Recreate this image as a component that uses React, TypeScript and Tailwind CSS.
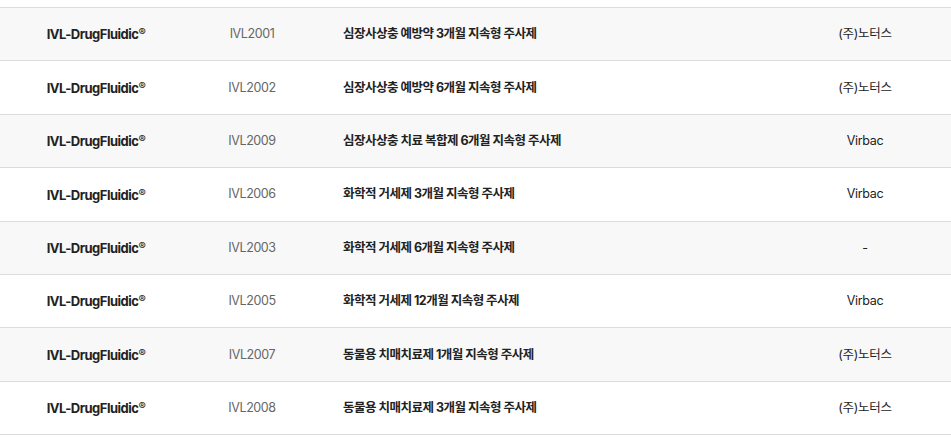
import React from 'react';

interface Product {
  code: string;
  name: string;
  maker: string;
}

const products: Product[] = [
  { code: 'IVL2001', name: '심장사상충 예방약 3개월 지속형 주사제', maker: '(주)노터스' },
  { code: 'IVL2002', name: '심장사상충 예방약 6개월 지속형 주사제', maker: '(주)노터스' },
  { code: 'IVL2009', name: '심장사상충 치료 복합제 6개월 지속형 주사제', maker: 'Virbac' },
  { code: 'IVL2006', name: '화학적 거세제 3개월 지속형 주사제', maker: 'Virbac' },
  { code: 'IVL2003', name: '화학적 거세제 6개월 지속형 주사제', maker: '-' },
  { code: 'IVL2005', name: '화학적 거세제 12개월 지속형 주사제', maker: 'Virbac' },
  { code: 'IVL2007', name: '동물용 치매치료제 1개월 지속형 주사제', maker: '(주)노터스' },
  { code: 'IVL2008', name: '동물용 치매치료제 3개월 지속형 주사제', maker: '(주)노터스' },
];

export default function App() {
  return (
    <div
      className="w-[951px] h-[443px] bg-white pt-[7px] text-[13px] text-[#222]"
      style={{ fontFamily: 'Inter, "Noto Sans CJK KR", sans-serif' }}
    >
      <div className="border-t border-[#dcdcdc]">
        {products.map((p, i) => (
          <div
            key={p.code}
            className={`grid grid-cols-[192px_120px_467px_172px] items-center h-[53.375px] pt-[1px] border-b border-[#dcdcdc] ${
              i % 2 === 0 ? 'bg-[#f8f8f8]' : 'bg-white'
            }`}
          >
            <div className="text-center font-bold tracking-[-0.5px]">
              IVL-DrugFluidic<span className="text-[11px] align-[3px] font-medium">®</span>
            </div>
            <div className="text-center text-[12.5px] text-[#666] tracking-[-0.4px]">{p.code}</div>
            <div className="pl-[31px] text-[12.5px] font-bold tracking-[-0.5px]">{p.name}</div>
            <div className="text-center text-[12.5px] tracking-[-0.3px]">{p.maker}</div>
          </div>
        ))}
      </div>
    </div>
  );
}
